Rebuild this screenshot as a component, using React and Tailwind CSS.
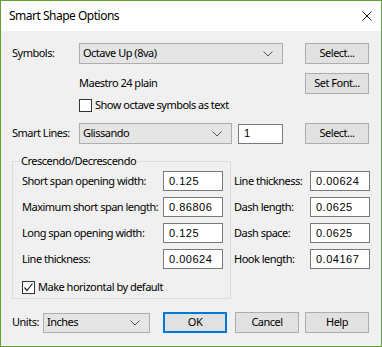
import React from "react";

const font = { fontFamily: '"Noto Sans", sans-serif' };

function Chevron() {
  return (
    <svg width="10" height="6" viewBox="0 0 10 6" className="shrink-0">
      <polyline points="0.5,0.5 5,5 9.5,0.5" fill="none" stroke="#555" strokeWidth="1" />
    </svg>
  );
}

function Dropdown({ text, w, h = "h-[21px]" }) {
  return (
    <div className={`${w} ${h} flex items-center justify-between border border-[#adadad] bg-[#e5e5e5] pl-[3px] pr-[9px] text-[11px] text-black whitespace-nowrap`}>
      <span>{text}</span>
      <Chevron />
    </div>
  );
}

function Button({ children, ok }) {
  return (
    <div
      className={`w-[64px] h-[21px] flex items-center justify-center bg-[#e1e1e1] text-[11px] text-black whitespace-nowrap ${
        ok ? "border-2 border-[#0078d7]" : "border border-[#adadad]"
      }`}
    >
      {children}
    </div>
  );
}

function TextBox({ value, w = "w-[60px]" }) {
  return (
    <div
      className={`${w} h-[20px] flex items-center border border-[#7a7a7a] bg-white pl-[5px] text-[11px] tracking-[0.5px] text-black`}
      style={{ fontFamily: '"Liberation Sans", sans-serif' }}
    >
      {value}
    </div>
  );
}

function CheckBox({ checked }) {
  return (
    <div className="w-[13px] h-[13px] border border-[#333] bg-white flex items-center justify-center shrink-0">
      {checked && (
        <svg width="11" height="11" viewBox="0 0 11 11">
          <polyline points="1.5,5.5 4,8.5 9.5,1.5" fill="none" stroke="#222" strokeWidth="1.2" />
        </svg>
      )}
    </div>
  );
}

function Row({ label, value, lw }) {
  return (
    <div className="flex h-[20px] items-center">
      <div className={`${lw} text-[11px] text-black whitespace-nowrap`}>{label}</div>
      <TextBox value={value} />
    </div>
  );
}

export default function App() {
  return (
    <div style={font} className="w-[382px] h-[347px] border border-[#64a033] flex flex-col bg-[#f0f0f0] text-black tracking-[-0.5px]">
      <div className="h-[30px] bg-white flex items-center justify-between pl-[8px] pr-[9px]">
        <span className="text-[12px] tracking-[-0.5px]">Smart Shape Options</span>
        <svg width="10" height="10" viewBox="0 0 10 10">
          <path d="M0.5 0.5 L9.5 9.5 M9.5 0.5 L0.5 9.5" stroke="#111" strokeWidth="1" fill="none" />
        </svg>
      </div>

      <div className="flex-1 pl-[11px] pt-[12px]">
        <div className="flex h-[21px] items-center">
          <div className="w-[67px] text-[11px]">Symbols:</div>
          <Dropdown text="Octave Up (8va)" w="w-[204px]" />
          <div className="w-[22px]" />
          <Button>Select...</Button>
        </div>
        <div className="mt-[9px] flex h-[21px] items-center">
          <div className="w-[67px]" />
          <div className="w-[226px] text-[11px]">Maestro 24 plain</div>
          <Button>Set Font...</Button>
        </div>
        <div className="mt-[5px] flex h-[13px] items-center">
          <div className="w-[67px]" />
          <CheckBox />
          <span className="ml-[3px] text-[11px] whitespace-nowrap">Show octave symbols as text</span>
        </div>

        <div className="mt-[11px] flex h-[21px] items-center">
          <div className="w-[67px] text-[11px] whitespace-nowrap">Smart Lines:</div>
          <Dropdown text="Glissando" w="w-[153px]" />
          <div className="w-[6px]" />
          <TextBox value="1" w="w-[45px]" />
          <div className="w-[22px]" />
          <Button>Select...</Button>
        </div>

        <div className="mt-[9px] flex">
          <fieldset className="w-[219px] h-[146px] border border-[#dcdcdc] pl-[9px] pt-[0px]">
            <legend className="-ml-[2px] px-[1px] text-[11px] leading-[16px]">Crescendo/Decrescendo</legend>
            <div className="mt-[2px] flex flex-col gap-[6px]">
              <Row label="Short span opening width:" value="0.125" lw="w-[141px]" />
              <Row label="Maximum short span length:" value="0.86806" lw="w-[141px]" />
              <Row label="Long span opening width:" value="0.125" lw="w-[141px]" />
              <Row label="Line thickness:" value="0.00624" lw="w-[141px]" />
            </div>
            <div className="mt-[12px] flex h-[13px] items-center">
              <CheckBox checked />
              <span className="ml-[3px] text-[11px] whitespace-nowrap">Make horizontal by default</span>
            </div>
          </fieldset>
          <div className="ml-[3px] pt-[18px] flex flex-col gap-[6px]">
            <Row label="Line thickness:" value="0.00624" lw="w-[76px]" />
            <Row label="Dash length:" value="0.0625" lw="w-[76px]" />
            <Row label="Dash space:" value="0.0625" lw="w-[76px]" />
            <Row label="Hook length:" value="0.04167" lw="w-[76px]" />
          </div>
        </div>

        <div className="mt-[13px] flex h-[21px] items-center">
          <div className="w-[31px] text-[11px]">Units:</div>
          <Dropdown text="Inches" w="w-[107px]" h="h-[20px]" />
          <div className="w-[13px]" />
          <Button ok>OK</Button>
          <div className="w-[8px]" />
          <Button>Cancel</Button>
          <div className="w-[6px]" />
          <Button>Help</Button>
        </div>
      </div>
    </div>
  );
}
